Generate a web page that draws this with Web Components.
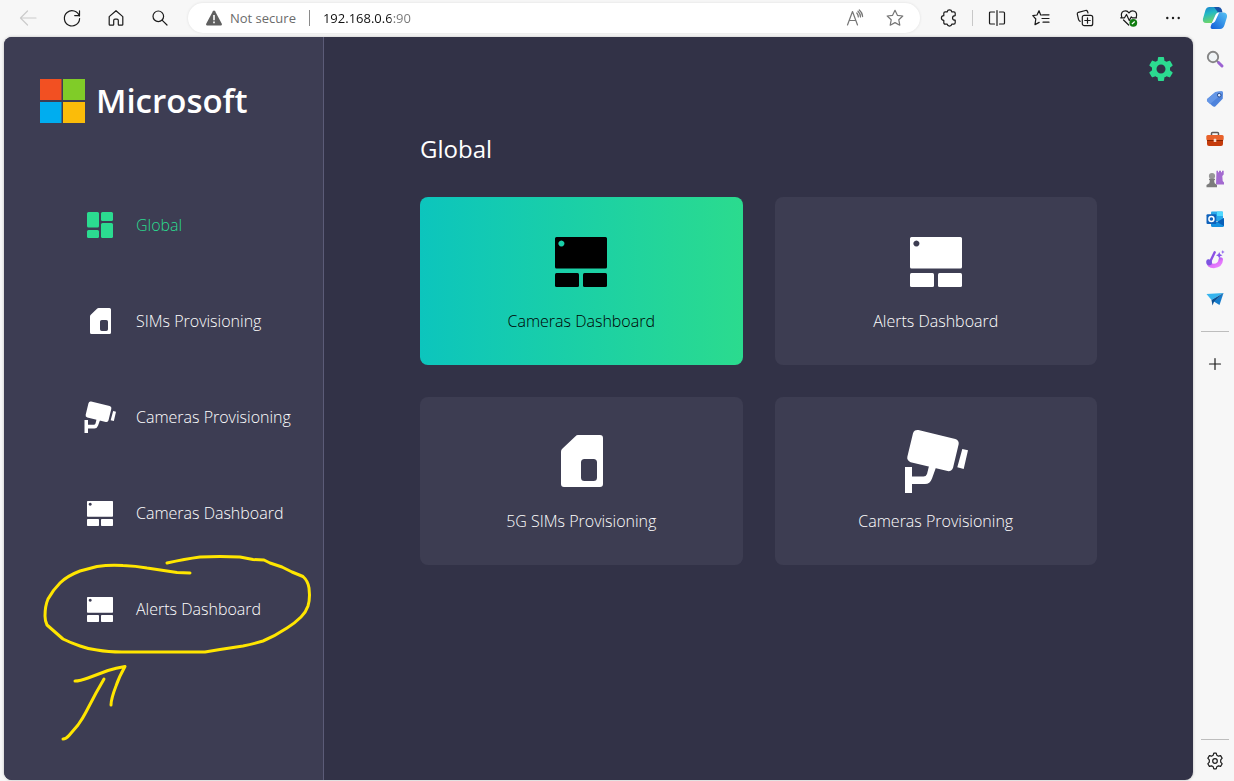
<!DOCTYPE html>
<html lang="en">
<head>
<meta charset="utf-8">
<meta name="viewport" content="width=device-width, initial-scale=1">
<title>Global</title>
<style>
  html, body { margin: 0; }
  body { background: #f7f7f7; font: 16px/24px "Open Sans", "Noto Sans", sans-serif; color: #fff; }
</style>
</head>
<body>
<browser-window>
  <browser-toolbar slot="toolbar"></browser-toolbar>
  <portal-app>
    <side-nav slot="nav">
      <nav-item icon="tiles" href="#global" current>Global</nav-item>
      <nav-item icon="sim" href="#sims">SIMs Provisioning</nav-item>
      <nav-item icon="camera" href="#cameras">Cameras Provisioning</nav-item>
      <nav-item icon="dashboard" href="#cameras-dashboard">Cameras Dashboard</nav-item>
      <nav-item icon="dashboard" href="#alerts-dashboard">Alerts Dashboard</nav-item>
      <ink-note slot="note"></ink-note>
    </side-nav>
    <global-page heading="Global">
      <dash-card icon="dashboard" href="#cameras-dashboard" active>Cameras Dashboard</dash-card>
      <dash-card icon="dashboard" href="#alerts-dashboard">Alerts Dashboard</dash-card>
      <dash-card icon="sim" href="#sims">5G SIMs Provisioning</dash-card>
      <dash-card icon="camera" href="#cameras">Cameras Provisioning</dash-card>
    </global-page>
  </portal-app>
  <edge-sidebar slot="sidebar"></edge-sidebar>
</browser-window>

<script>
const line = (body, color = '#1b1b1b') =>
  `<g fill="none" stroke="${color}" stroke-width="1.2" stroke-linecap="round" stroke-linejoin="round">${body}</g>`;

/* name: [viewBox size, markup] */
const ICONS = {
  tiles: [64, `<g fill="currentColor"><rect x="6" y="6" width="24" height="31" rx="3"/><rect x="34" y="6" width="24" height="18" rx="3"/><rect x="6" y="42" width="24" height="16" rx="3"/><rect x="34" y="28" width="24" height="30" rx="3"/></g>`],
  dashboard: [64, `<g fill="currentColor"><path fill-rule="evenodd" d="M7.500 8H56.500Q58 8 58 9.500V38Q58 39.500 56.500 39.500H7.500Q6 39.500 6 38V9.500Q6 8 7.500 8ZM12.400 11.400a3 3 0 1 0 .01 0Z"/><rect x="6" y="44" width="24" height="14" rx="1.500"/><rect x="34" y="44" width="24" height="14" rx="1.500"/></g>`],
  sim: [64, `<path fill="currentColor" fill-rule="evenodd" d="M29 6H51Q54 6 54 9V55Q54 58 51 58H15Q12 58 12 55V23Q12 21 13 20L26.500 7.200Q27.500 6 29 6ZM35.500 30Q32 30 32 33.500V48.500Q32 52 35.500 52H44.500Q48 52 48 48.500V33.500Q48 30 44.500 30Z"/>`],
  camera: [64, `<g fill="currentColor"><rect width="47" height="33" rx="4.500" transform="translate(10 0) rotate(13.500)"/><path d="M58.300 20 64 21.300 59.700 40 53.300 38.300ZM1 38H8V64H1Z"/><path d="M8 47.500H19.500Q22 47.500 23 45L25.500 35 32.500 37 28 49.500Q26 55 21 55H8Z"/></g>`],
  cog: [24, `<path fill="currentColor" d="M19.140 12.940c.04-.3.06-.61.06-.94 0-.32-.02-.64-.07-.94l2.030-1.580c.18-.14.23-.41.12-.61l-1.920-3.320c-.12-.22-.37-.29-.59-.22l-2.390.96c-.5-.38-1.030-.7-1.620-.94l-.36-2.540c-.04-.24-.24-.41-.48-.41h-3.840c-.24 0-.43.17-.47.41l-.36 2.540c-.59.24-1.130.57-1.620.94l-2.390-.96c-.22-.08-.47 0-.59.22L2.740 8.870c-.12.21-.08.47.12.61l2.030 1.580c-.05.3-.09.63-.09.94s.02.64.07.94l-2.030 1.580c-.18.14-.23.41-.12.61l1.920 3.320c.12.22.37.29.59.22l2.390-.96c.5.38 1.030.7 1.620.94l.36 2.540c.05.24.24.41.48.41h3.840c.24 0 .44-.17.47-.41l.36-2.540c.59-.24 1.130-.56 1.620-.94l2.390.96c.22.08.47 0 .59-.22l1.920-3.320c.12-.22.07-.47-.12-.61l-2.010-1.580zM12 15.600c-1.980 0-3.600-1.620-3.600-3.600s1.620-3.600 3.600-3.600 3.600 1.620 3.600 3.600-1.620 3.600-3.600 3.600z"/>`],
  logo: [46, `<path fill="#f25022" d="M0 1H21.500V22H0Z"/><path fill="#80cc28" d="M23 1H45V22H23Z"/><path fill="#00adef" d="M0 24H21.500V45H0Z"/><path fill="#fbbc09" d="M23 24H45V45H23Z"/>`],

  back: [20, line('<path d="M18 10H2.500M9.500 3 2.500 10 9.500 17"/>', '#cbcbcb')],
  reload: [20, line('<path d="M17.300 8.200A7.600 7.600 0 1 0 17.600 10.500M17.500 2.800V7.600H12.700"/>')],
  home: [20, line('<path d="M3.200 8.600 10 2.700 16.800 8.600V16.400Q16.800 17.200 16 17.200H13Q12.300 17.200 12.300 16.400V12.400Q12.300 11.200 11 11.200H9Q7.700 11.200 7.700 12.400V16.400Q7.700 17.200 7 17.200H4Q3.200 17.200 3.200 16.400Z"/>')],
  find: [20, line('<circle cx="8.300" cy="8.300" r="5.300"/><path d="M12.300 12.300 17 17"/>')],
  warning: [20, `<path fill="#5f5f5f" d="M10 2.500Q10.700 2.500 11.100 3.200L17.800 15.800Q18.400 17.300 17 17.500H3Q1.600 17.300 2.200 15.800L8.900 3.200Q9.300 2.500 10 2.500Z"/><path stroke="#fff" stroke-width="1.600" d="M10 7V12.200M10 13.600V15.200"/>`],
  aloud: [20, line('<path d="M2.500 17 7.500 3.500 12.500 17M4.200 12.500H10.800M11.800 5Q13.300 6.800 13.300 9M13 3.200Q15.500 5.600 15.500 9M14.300 2Q17.600 5 17.600 8.600"/>', '#767676')],
  star: [20, line('<path d="M10 2.300 12.400 7.300 17.800 8 13.800 11.800 14.800 17.200 10 14.600 5.200 17.200 6.200 11.800 2.200 8 7.600 7.300Z"/>', '#767676')],
  puzzle: [20, line('<path d="M6.200 3.800H8.200Q8.500 1.900 10.500 1.900T12.800 3.800H14.800Q16.200 3.800 16.200 5.200V7.600Q13.500 7.700 13.500 9.900T16.200 12.200V14.800Q16.200 16.200 14.800 16.200H12.800Q12.500 18.100 10.500 18.100T8.200 16.200H6.200Q4.800 16.200 4.800 14.800V12.300Q2.400 12.200 2.400 10T4.800 7.700V5.200Q4.800 3.800 6.200 3.800Z"/>')],
  split: [20, line('<path d="M7.500 4H3.500Q2.500 4 2.500 5V15Q2.500 16 3.500 16H7.500M12.500 4H16.500Q17.500 4 17.500 5V15Q17.500 16 16.500 16H12.500M10 2.500V17.500"/>')],
  favorites: [20, line('<path d="M11.500 7 9.700 6.900 8 2.700 6 7 1.800 7.700 4.800 11 4 16.600 8.200 14.400M12 6.800H18M11 10.500H18M12 14.200H18"/>')],
  collections: [20, line('<rect x="7.300" y="7.300" width="10.400" height="10.400" rx="2"/><path d="M12.500 9.800V15.200M9.800 12.500H15.200M5.200 13.400Q3.900 12.900 3.500 11.300L2.300 6.200Q2 4.800 3.400 4.300L10.500 2.500Q12 2.200 12.500 3.500L13 5"/>')],
  health: [20, line('<path d="M2.700 9Q1.500 5 4.500 3.300 8 1.800 10 5 12 1.800 15.500 3.300 18.500 5 17.300 9M4.500 12 9.700 17M1.700 9.800H5.500L7.500 6.500 10.300 12.500 12.300 8.800 13.300 9.800H17.500"/>') + '<circle cx="14.300" cy="14.800" r="3.900" fill="#107c10"/><path d="M12.900 16 15.700 13.500" stroke="#fff" stroke-width="1.200"/>'],
  more: [20, '<g fill="#1b1b1b"><circle cx="4.300" cy="10" r="1.200"/><circle cx="10" cy="10" r="1.200"/><circle cx="15.700" cy="10" r="1.200"/></g>'],
  copilot: [24, `<defs><linearGradient id="a" x1="0" y1="0" x2=".3" y2="1"><stop stop-color="#1b7fd0"/><stop offset=".45" stop-color="#22b8c4"/><stop offset="1" stop-color="#6fd66a"/></linearGradient><linearGradient id="b" x1="1" y1="0" x2="0" y2="1"><stop stop-color="#58c4f4"/><stop offset="1" stop-color="#0f5bd8"/></linearGradient></defs><path fill="url(#a)" d="M6.500 1H15Q17 1 16.300 3.500L12.500 14Q11.500 17 9 17H3Q-.5 17-.1 13L2.500 4Q3.500 1 6.500 1Z"/><path fill="#1753a8" d="M11 1H15.500Q18 1 18.700 3.500L19.500 6.500H15Z"/><path fill="url(#b)" d="M15.500 6.500H21Q24.500 7 24 11L21.500 19Q20.300 23 17 23H9.500Q7 23 7.800 20L12 9.500Q13 6.500 15.500 6.500Z"/><path fill="#fff" d="M12.700 8.500Q13.500 6.700 16.200 6.500L12 15.500Q10.800 17.300 8.500 17.400Z"/>`],

  glass: [20, '<circle cx="8" cy="8" r="5.200" fill="#f0f4f6" stroke="#858585" stroke-width="1.900"/><path d="M12 12 14 14" stroke="#858585" stroke-width="2"/><path d="M13.700 13.700 17 17" stroke="#9b62d2" stroke-width="3" stroke-linecap="round"/>'],
  tag: [20, '<path fill="#4e83dc" d="M10.500 3 16.500 2.300Q18 2.300 18 4L17.700 9.700 10.500 17.200Q9 18.300 7.500 17L2.500 12.500Q1.300 11 2.500 9.800Z"/><path fill="#6496e6" d="M10.500 3 16.500 2.300Q18 2.300 18 4L5 15 2.500 12.500Q1.300 11 2.500 9.800Z"/><circle cx="14.200" cy="6.200" r="1.800" fill="#dfe9fb" stroke="#274d91"/>'],
  toolbox: [20, '<path fill="none" stroke="#5e5a58" stroke-width="1.500" d="M6.500 6V4.500Q6.500 3.500 7.500 3.500H12.500Q13.500 3.500 13.500 4.500V6"/><path fill="#c53c0c" d="M2 8H18V15Q18 17 16 17H4Q2 17 2 15Z"/><rect x="1.300" y="6" width="17.400" height="5.500" rx="1.500" fill="#e8622b"/><path stroke="#8b2500" d="M2 11.500H18"/><rect x="8.700" y="9.800" width="2.600" height="3.200" rx=".6" fill="#f6d8c8"/>'],
  chess: [20, '<path fill="#a36ad0" d="M11.500 1.800H13V3.200H14V1.800H16V3.200H17V1.800H18.700V5.500L17.300 7 17.700 12 19 13.500V15.500H11Z"/><circle cx="7" cy="7" r="3.100" fill="#979797"/><path fill="#7c7c7c" d="M4 9.700H10V11.200H9L9.700 14.200 12 16V18.300H1.500V16L4.300 14.200 5 11.200H4Z"/>'],
  outlook: [20, '<path fill="#28a8ea" d="M7 2.500H17Q18 2.500 18 3.500V12H6V3.500Q6 2.500 7 2.500Z"/><path fill="#50d9ff" d="M12 2.500H17Q18 2.500 18 3.500V7H12Z"/><path fill="#1490df" d="M6 10 12 13 19 9V16.500Q19 18 17.500 18H7.500Q6 18 6 16.500Z"/><path fill="#0a60b8" d="M12 13 19 9V17Z"/><rect x="1.500" y="5.200" width="9.800" height="9.800" rx="1" fill="#0f62bb"/><circle cx="6.400" cy="10.100" r="2.500" fill="none" stroke="#fff" stroke-width="1.500"/>'],
  designer: [20, '<defs><linearGradient id="d" x1="0" y1="0" x2="1" y2="1"><stop stop-color="#6e4fe0"/><stop offset=".6" stop-color="#e070fa"/><stop offset="1" stop-color="#e985ff"/></linearGradient></defs><path fill="none" stroke="url(#d)" stroke-width="4.500" stroke-linecap="round" d="M3.500 12.500Q3.300 16.800 8.800 17 15.500 16.500 15.800 10.500"/><path stroke="#8b50e4" stroke-width="2.400" stroke-linecap="round" d="M5 13 9.700 3.300"/><circle cx="4.300" cy="13.500" r="2.700" fill="#7c55df"/><path fill="#8556ec" d="M14.200 3 15.200 5.300 17.500 6.200 15.200 7.200 14.200 9.500 13.200 7.200 11 6.200 13.200 5.300ZM17.800 1 18.300 2.500 19.700 3 18.300 3.500 17.800 5 17.300 3.500 16 3 17.300 2.500Z"/>'],
  plane: [20, '<path fill="#36b4ee" d="M1.500 5 18.500 4 6.500 11Z"/><path fill="#147bcb" d="M18.500 4 14.500 16 8.800 12.500Z"/><path fill="#0b4f92" d="M18.500 4 6.500 11 7.500 16.500 9 12.700Z"/>'],
  plus: [20, line('<path d="M10 4.500V15.500M4.500 10H15.500"/>')],
  gear: [20, line('<path d="M8.200 4.200 8.800 2.200H11.200L11.800 4.200 13.500 5.200 15.600 4.600 17.200 7.200 15.700 8.800V11.200L17.200 12.800 15.600 15.400 13.500 14.800 11.800 15.800 11.200 17.800H8.800L8.200 15.800 6.500 14.800 4.400 15.400 2.800 12.800 4.300 11.200V8.800L2.800 7.200 4.400 4.600 6.500 5.200Z"/><circle cx="10" cy="10" r="2.300"/>')]
};

/* Shared base: fills an open shadow root from the class's markup. */
class Part extends HTMLElement {
  connectedCallback() {
    if (this.shadowRoot) return;
    const t = document.createElement('template');
    t.innerHTML = this.markup();
    this.attachShadow({ mode: 'open' }).append(t.content.cloneNode(true));
  }
}

customElements.define('ui-icon', class extends Part {
  markup() {
    const [size, body] = ICONS[this.getAttribute('name')];
    return `<style>
      :host { display: block; flex: none; width: var(--icon-size, 20px); height: var(--icon-size, 20px); }
      svg { display: block; width: 100%; height: 100%; overflow: visible; }
    </style><svg viewBox="0 0 ${size} ${size}" aria-hidden="true">${body}</svg>`;
  }
});

customElements.define('tool-button', class extends Part {
  markup() {
    return `<style>
      :host { display: block; flex: none; }
      button { display: grid; place-items: center; width: 100%; height: 100%; padding: 0; border: 0; background: none; color: inherit; }
    </style><button type="button" aria-label="${this.getAttribute('label')}"><ui-icon name="${this.getAttribute('icon')}"></ui-icon></button>`;
  }
});

customElements.define('browser-window', class extends Part {
  markup() {
    return `<style>
      :host { display: grid; grid-template: auto 1fr / minmax(0, 1fr) 41px; min-height: 100vh; }
      header { grid-column: 1 / -1; }
      main { display: grid; padding: 0 0 1px 4px; }
    </style>
    <header><slot name="toolbar"></slot></header>
    <main><slot></slot></main>
    <slot name="sidebar"></slot>`;
  }
});

customElements.define('browser-toolbar', class extends Part {
  markup() {
    return `<style>
      :host { display: flex; align-items: center; height: 36px; padding: 0 0 1px 6px; background: #f7f7f7; }
      tool-button { width: 44px; height: 36px; }
      address-bar { flex: 1; margin: 0 7px 0 6px; }
      .rule { width: 1px; height: 16px; margin: 0 2px 0 1px; background: #c8c8c8; }
      .copilot { width: 39px; --icon-size: 24px; }
    </style>
    <tool-button icon="back" label="Back"></tool-button>
    <tool-button icon="reload" label="Refresh"></tool-button>
    <tool-button icon="home" label="Home"></tool-button>
    <tool-button icon="find" label="Search"></tool-button>
    <address-bar></address-bar>
    <tool-button icon="puzzle" label="Extensions"></tool-button>
    <span class="rule"></span>
    <tool-button icon="split" label="Split screen"></tool-button>
    <tool-button icon="favorites" label="Favorites"></tool-button>
    <tool-button icon="collections" label="Collections"></tool-button>
    <tool-button icon="health" label="Browser essentials"></tool-button>
    <tool-button icon="more" label="More"></tool-button>
    <tool-button class="copilot" icon="copilot" label="Copilot"></tool-button>`;
  }
});

customElements.define('address-bar', class extends Part {
  markup() {
    return `<style>
      :host { display: flex; align-items: center; box-sizing: border-box; height: 30px; padding: 0 5px 0 16px;
        border-radius: 15px; background: #fff; box-shadow: 0 0 3px #0000001a;
        font: 13px/20px "Open Sans", "Noto Sans", sans-serif; color: #6b6b6b; }
      .security { display: flex; align-items: center; gap: 6px; padding: 0; border: 0; background: none; font: inherit; color: inherit; white-space: nowrap; }
      .rule { flex: none; width: 1px; height: 16px; margin: 0 13px; background: #8a8a8a; }
      /* The host is dark and the port is muted. */
      input { flex: 1; min-width: 0; padding: 0; border: 0; outline: 0; font: inherit; color: transparent;
        background: linear-gradient(90deg, #111 68px, #767676 68px); -webkit-background-clip: text; background-clip: text; }
      tool-button { width: 40px; height: 30px; }
    </style>
    <button class="security" type="button"><ui-icon name="warning"></ui-icon>Not secure</button>
    <span class="rule"></span>
    <input type="text" aria-label="Address" value="192.168.0.6:90" spellcheck="false">
    <tool-button icon="aloud" label="Read aloud"></tool-button>
    <tool-button icon="star" label="Add to favorites"></tool-button>`;
  }
});

customElements.define('edge-sidebar', class extends Part {
  markup() {
    const tools = { glass: 'Search', tag: 'Shopping', toolbox: 'Tools', chess: 'Games', outlook: 'Outlook', designer: 'Designer', plane: 'Drop' };
    return `<style>
      :host { display: flex; flex-direction: column; align-items: center; padding: 2px 0 0 3px; }
      tool-button { width: 38px; height: 40px; }
      hr { width: 28px; height: 1px; margin: 12px 0; border: 0; background: #bdbdbd; }
      .end { margin: auto 0 1px; }
    </style>
    ${Object.entries(tools).map(([icon, label]) => `<tool-button icon="${icon}" label="${label}"></tool-button>`).join('')}
    <hr>
    <tool-button icon="plus" label="Customize"></tool-button>
    <hr class="end">
    <tool-button icon="gear" label="Settings"></tool-button>`;
  }
});

customElements.define('portal-app', class extends Part {
  markup() {
    return `<style>
      :host { display: grid; grid-template-columns: 320px minmax(0, 1fr); overflow: hidden; border-radius: 8px; background: #323247; box-shadow: 0 0 3px #00000040; }
    </style><slot name="nav"></slot><slot></slot>`;
  }
});

customElements.define('side-nav', class extends Part {
  markup() {
    return `<style>
      :host { display: block; position: relative; box-sizing: border-box; padding: 40px 0 0 36px; border-right: 1px solid #5c5c78; background: #3d3d53; }
      .brand { display: flex; align-items: center; gap: 10px; height: 48px; color: #fff; text-decoration: none;
        font: 600 33px/48px "Open Sans", "Noto Sans", sans-serif; --icon-size: 46px; }
      nav { display: grid; gap: 64px; padding: 84px 0 0 44px; }
    </style>
    <a class="brand" href="#home"><ui-icon name="logo"></ui-icon><span>Microsoft</span></a>
    <nav aria-label="Main"><slot></slot></nav>
    <slot name="note"></slot>`;
  }
});

customElements.define('nav-item', class extends Part {
  markup() {
    return `<style>
      :host { display: block; color: #fff; font-weight: 340; --icon-size: 32px; }
      :host([current]) { color: #2bdb90; }
      a { display: flex; align-items: center; gap: 20px; height: 32px; color: inherit; text-decoration: none; white-space: nowrap; }
    </style><a href="${this.getAttribute('href')}"><ui-icon name="${this.getAttribute('icon')}"></ui-icon><span><slot></slot></span></a>`;
  }
});

/* Hand-drawn ring and arrow over the last navigation entry. */
customElements.define('ink-note', class extends Part {
  markup() {
    return `<style>
      :host { display: block; position: absolute; left: 36px; top: 513px; width: 280px; height: 200px; pointer-events: none; }
      svg { display: block; }
    </style>
    <svg width="280" height="200" viewBox="40 550 280 200" fill="none" stroke="#ffe600" stroke-width="3" stroke-linecap="round" stroke-linejoin="round" aria-hidden="true">
      <path d="M167 563Q185 559 200 557 220 556 240 557L253 559.500 264 560 270 563 282 567 292 572 303 576.500Q308 581 309 588L309.500 595Q309.500 601 308 606 306 612 301 617 295 623 287 628 275 636 263 641 253 644 243 646L220 649.500 205 652H122Q108 652 97 650 88 649 80 646 71 643 63 639L47 625Q45 621 45 616 45 606 48 599 53 590 60 583 67 576 80 571L97 566.500Q110 564.500 123 565.500 136 566 147 568L177 572.500 190 573"/>
      <path d="M75 681Q80 681 88 678L108 670.500Q116 668 125 666.500 119 677 116 686 111 699 111 705"/>
      <path d="M104 679 96 693 86 712Q83 718 78 725L69 735.500Q66 739 63 739"/>
    </svg>`;
  }
});

customElements.define('global-page', class extends Part {
  markup() {
    return `<style>
      :host { display: block; }
      header { display: flex; justify-content: flex-end; padding: 16px 16px 0; color: #2bdb90; --icon-size: 30px; }
      tool-button { width: 32px; height: 32px; }
      section { padding: 48px 96px; }
      h1 { margin: 0 0 32px; font-size: 24px; line-height: 32px; font-weight: 400; }
      .cards { display: grid; grid-template-columns: repeat(auto-fit, minmax(240px, 1fr)); gap: 32px; }
    </style>
    <header><tool-button icon="cog" label="Settings"></tool-button></header>
    <section><h1>${this.getAttribute('heading')}</h1><div class="cards"><slot></slot></div></section>`;
  }
});

customElements.define('dash-card', class extends Part {
  markup() {
    return `<style>
      :host { display: block; border-radius: 8px; background: #3d3d52; color: #fff; font-weight: 340; --icon-size: 64px; }
      :host([active]) { background: linear-gradient(90deg, #0cc5bd, #2bdb8e); color: #000; }
      a { display: flex; flex-direction: column; align-items: center; gap: 16px; padding: 32px; color: inherit; text-decoration: none; }
    </style><a href="${this.getAttribute('href')}"><ui-icon name="${this.getAttribute('icon')}"></ui-icon><span><slot></slot></span></a>`;
  }
});
</script>
</body>
</html>
